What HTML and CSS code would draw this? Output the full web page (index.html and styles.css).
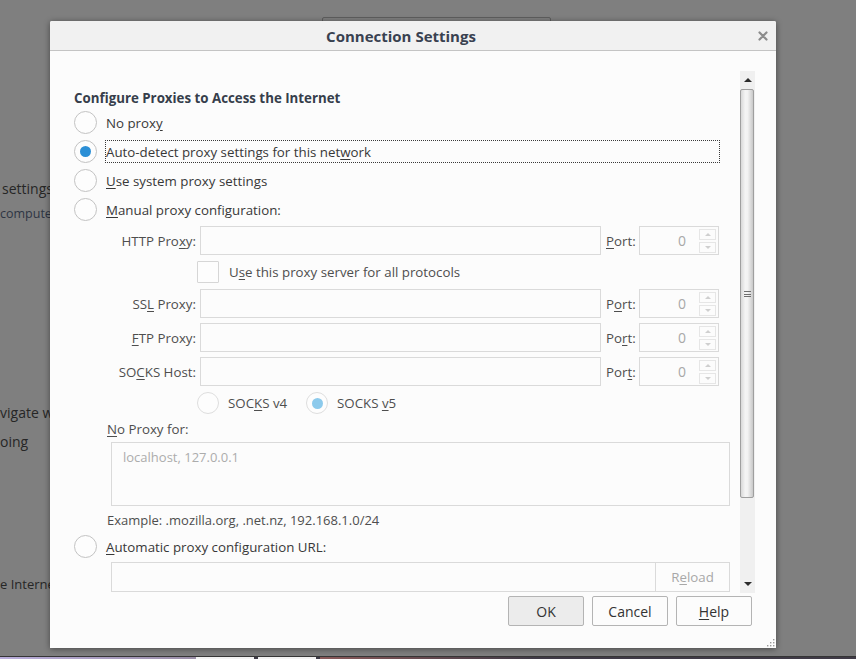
FILE: index.html
```html
<!DOCTYPE html>
<html>
<head>
<meta charset="utf-8">
<title>Connection Settings</title>
<link rel="stylesheet" href="styles.css">
</head>
<body>
<div class="screen">
  <div class="backdrop">
    <div class="bg-button"></div>
    <p class="bg-text t-settings">settings</p>
    <p class="bg-text t-compute">compute</p>
    <p class="bg-text t-navigate">vigate w</p>
    <p class="bg-text t-going">oing</p>
    <p class="bg-text t-internet">e Interne</p>
  </div>
  <div class="taskbar">
    <span class="tb-seg tb-a"></span>
    <span class="tb-seg tb-btn"></span>
    <span class="tb-seg tb-btn"></span>
    <span class="tb-seg tb-b"></span>
  </div>

  <div class="dialog">
    <div class="titlebar">
      <span class="title">Connection Settings</span>
      <svg class="close" width="10" height="10" viewBox="0 0 10 10"><path d="M1.5 1.5 L8.5 8.5 M8.5 1.5 L1.5 8.5" stroke="#8c8c8c" stroke-width="2.2" stroke-linecap="round"/></svg>
    </div>
    <div class="dlg-body">
      <div class="scroller">
        <div class="content">
          <h2 class="heading">Configure Proxies to Access the Internet</h2>

          <div class="radio-row">
            <span class="radio"></span>
            <span class="rlabel">No prox<u>y</u></span>
          </div>
          <div class="radio-row">
            <span class="radio checked"></span>
            <span class="rlabel focused">Auto-detect proxy settings for this net<u>w</u>ork</span>
          </div>
          <div class="radio-row">
            <span class="radio"></span>
            <span class="rlabel"><u>U</u>se system proxy settings</span>
          </div>
          <div class="radio-row">
            <span class="radio"></span>
            <span class="rlabel"><u>M</u>anual proxy configuration:</span>
          </div>

          <div class="manual">
            <div class="field-row">
              <span class="flabel">HTTP Pro<u>x</u>y:</span>
              <span class="input host"></span>
              <span class="plabel"><u>P</u>ort:</span>
              <span class="input port"><span class="pval">0</span><span class="spin"><span class="spin-up"></span><span class="spin-down"></span></span></span>
            </div>
            <div class="check-row">
              <span class="checkbox"></span>
              <span class="clabel">U<u>s</u>e this proxy server for all protocols</span>
            </div>
            <div class="field-row gap">
              <span class="flabel">SS<u>L</u> Proxy:</span>
              <span class="input host"></span>
              <span class="plabel">P<u>o</u>rt:</span>
              <span class="input port"><span class="pval">0</span><span class="spin"><span class="spin-up"></span><span class="spin-down"></span></span></span>
            </div>
            <div class="field-row gap">
              <span class="flabel"><u>F</u>TP Proxy:</span>
              <span class="input host"></span>
              <span class="plabel">Po<u>r</u>t:</span>
              <span class="input port"><span class="pval">0</span><span class="spin"><span class="spin-up"></span><span class="spin-down"></span></span></span>
            </div>
            <div class="field-row gap">
              <span class="flabel">SO<u>C</u>KS Host:</span>
              <span class="input host"></span>
              <span class="plabel">Por<u>t</u>:</span>
              <span class="input port"><span class="pval">0</span><span class="spin"><span class="spin-up"></span><span class="spin-down"></span></span></span>
            </div>
            <div class="socks-row">
              <span class="socks-opt">
                <span class="radio small"></span>
                <span class="slabel">SOC<u>K</u>S v4</span>
              </span>
              <span class="socks-opt">
                <span class="radio small checked-dis"></span>
                <span class="slabel">SOCKS <u>v</u>5</span>
              </span>
            </div>
          </div>

          <div class="noproxy-label"><u>N</u>o Proxy for:</div>
          <div class="textarea"><span class="placeholder">localhost, 127.0.0.1</span></div>
          <div class="example">Example: .mozilla.org, .net.nz, 192.168.1.0/24</div>

          <div class="radio-row">
            <span class="radio"></span>
            <span class="rlabel"><u>A</u>utomatic proxy configuration URL:</span>
          </div>
          <div class="url-row">
            <span class="input url"></span>
            <span class="reload">R<u>e</u>load</span>
          </div>
        </div>

        <div class="scrollbar">
          <div class="sb-btn sb-up"><span class="tri-up"></span></div>
          <div class="sb-thumb"><span class="grip-lines"></span></div>
          <div class="sb-track"></div>
          <div class="sb-btn sb-down"><span class="tri-down"></span></div>
        </div>
      </div>

      <div class="buttons">
        <span class="btn default">OK</span>
        <span class="btn">Cancel</span>
        <span class="btn"><u>H</u>elp</span>
      </div>
    </div>
    <svg class="resize" width="9" height="9" viewBox="0 0 9 9">
      <rect x="7" y="1" width="1.4" height="1.4" fill="#9a9a9a"/>
      <rect x="4" y="4" width="1.4" height="1.4" fill="#9a9a9a"/>
      <rect x="7" y="4" width="1.4" height="1.4" fill="#9a9a9a"/>
      <rect x="1" y="7" width="1.4" height="1.4" fill="#9a9a9a"/>
      <rect x="4" y="7" width="1.4" height="1.4" fill="#9a9a9a"/>
      <rect x="7" y="7" width="1.4" height="1.4" fill="#9a9a9a"/>
    </svg>
  </div>
</div>
</body>
</html>
```

FILE: styles.css
```css
* { box-sizing: border-box; }

html, body {
  margin: 0;
  padding: 0;
}

body {
  width: 856px;
  height: 659px;
  overflow: hidden;
  background: #7f7f7f;
  font-family: "Open Sans", "Noto Sans", "DejaVu Sans", sans-serif;
}

.screen {
  position: relative;
  width: 856px;
  height: 659px;
}

/* ---------- dimmed page behind the dialog ---------- */
.backdrop {
  height: 656px;
  overflow: hidden;
  background: #7f7f7f;
  padding-top: 17px;
}

.bg-button {
  margin-left: 322px;
  width: 229px;
  height: 40px;
  border: 1px solid #5e5e5e;
  border-radius: 2px;
}

.bg-text {
  margin: 0;
  height: 20px;
  line-height: 20px;
  font-size: 13.5px;
  color: #262626;
  white-space: nowrap;
}

.t-settings { margin-top: 122px; margin-left: 2px; font-size: 14px; }
.t-compute  { margin-top: 5px; color: #2e3544; font-size: 12.5px; }
.t-navigate { margin-top: 179px; font-size: 14px; }
.t-going    { margin-top: 9px; font-size: 14px; }
.t-internet { margin-top: 122px; font-size: 13px; }

.taskbar {
  display: flex;
  height: 3px;
  border-top: 1px solid #353535;
  background: #3d3a46;
}
.tb-seg { display: block; height: 2px; }
.tb-a { width: 196px; background: linear-gradient(90deg, #b9addb, #9b8fa8); }
.tb-btn { width: 58px; margin-right: 4px; background: #f2f2f2; }
.tb-b { flex: 1; background: linear-gradient(90deg, #8a5a5a, #3f3a46 40%); }

/* ---------- dialog ---------- */
.dialog {
  position: absolute;
  left: 50px;
  top: 21px;
  width: 726px;
  height: 627px;
  background: #fcfcfc;
  box-shadow: 0 1px 6px rgba(0, 0, 0, 0.45);
  border-radius: 2px 2px 0 0;
  display: flex;
  flex-direction: column;
}

.titlebar {
  height: 30px;
  flex: none;
  background: #f1f1f1;
  border-bottom: 1px solid #c4c4c4;
  display: flex;
  align-items: center;
  justify-content: center;
  position: relative;
  border-radius: 2px 2px 0 0;
}

.title {
  font-size: 15px;
  font-weight: 700;
  color: #394150;
  margin-right: 24px;
  margin-top: 1px;
}

.close {
  position: absolute;
  right: 8px;
  top: 10px;
}

.dlg-body {
  flex: 1;
  display: flex;
  flex-direction: column;
  padding: 20px 21px 0 12px;
}

.scroller {
  display: flex;
  height: 522px;
  flex: none;
}

.content {
  flex: 1;
  overflow: hidden;
  padding-left: 12px;
  font-size: 13.3px;
  color: #383838;
}

u { text-decoration: underline; text-underline-offset: 2px; }

.heading {
  margin: 18px 0 0;
  height: 18px;
  line-height: 18px;
  font-size: 13.3px;
  font-weight: 700;
  color: #363e4b;
  white-space: nowrap;
}

/* radio rows */
.radio-row {
  display: flex;
  align-items: center;
  height: 29px;
}
.heading + .radio-row { margin-top: 1px; }

.radio {
  flex: none;
  width: 23px;
  height: 23px;
  border-radius: 50%;
  border: 1px solid #c3c3c3;
  background: #fdfdfd;
  display: flex;
  align-items: center;
  justify-content: center;
}
.radio.checked::after {
  content: "";
  width: 11px;
  height: 11px;
  border-radius: 50%;
  background: #2b8fd6;
}
.radio.small {
  width: 22px;
  height: 22px;
  border-color: #dedede;
}
.radio.checked-dis::after {
  content: "";
  width: 11px;
  height: 11px;
  border-radius: 50%;
  background: #8ccaec;
}

.rlabel {
  margin-left: 8px;
  width: 615px;
  height: 23px;
  line-height: 20px;
  padding-top: 1px;
  border: 1px solid transparent;
  white-space: nowrap;
}
.rlabel.focused { border: 1px dotted #3a3a3a; }

/* manual config */
.manual {
  margin-top: 2px;
  margin-left: 37px;
  color: #4e4e4e;
}

.field-row {
  display: flex;
  align-items: center;
  height: 29px;
}
.field-row.gap { margin-top: 5px; }

.flabel {
  width: 85px;
  margin-right: 4px;
  text-align: right;
  white-space: nowrap;
}

.input {
  display: block;
  height: 29px;
  border: 1px solid #dadada;
  background: #fcfcfc;
}
.input.host { width: 401px; }

.plabel {
  width: 29px;
  margin-left: 5px;
  margin-right: 4px;
  white-space: nowrap;
}

.input.port {
  width: 80px;
  display: flex;
  align-items: center;
  justify-content: flex-end;
  padding-right: 2px;
}
.pval {
  color: #a8a8a8;
  margin-right: 13px;
  font-size: 14px;
}
.spin {
  display: flex;
  flex-direction: column;
  gap: 2px;
  width: 17px;
}
.spin-up, .spin-down {
  height: 11px;
  border: 1px solid #e6e6e6;
  position: relative;
}
.spin-up::after, .spin-down::after {
  content: "";
  position: absolute;
  left: 5px;
  top: 3px;
  border-left: 3px solid transparent;
  border-right: 3px solid transparent;
}
.spin-up::after { border-bottom: 3px solid #cfcfcf; }
.spin-down::after { border-top: 3px solid #cfcfcf; }

.check-row {
  display: flex;
  align-items: center;
  height: 24px;
  margin-top: 5px;
}
.checkbox {
  width: 22px;
  height: 22px;
  margin-left: 86px;
  border: 1px solid #d6d6d6;
  border-radius: 1px;
  background: #fdfdfd;
}
.clabel {
  margin-left: 10px;
  white-space: nowrap;
}

.socks-row {
  display: flex;
  align-items: center;
  height: 24px;
  margin-top: 5px;
  padding-left: 86px;
}
.socks-opt {
  display: flex;
  align-items: center;
}
.socks-opt:first-child { width: 109px; }
.slabel { margin-left: 9px; white-space: nowrap; }

.noproxy-label {
  margin-top: 5px;
  margin-left: 33px;
  height: 18px;
  line-height: 18px;
  color: #4e4e4e;
}

.textarea {
  margin-top: 4px;
  margin-left: 37px;
  width: 619px;
  height: 64px;
  border: 1px solid #dadada;
  background: #fcfcfc;
  padding: 5px 11px;
}
.placeholder {
  color: #acacac;
  font-size: 13px;
}

.example {
  margin-top: 5px;
  margin-left: 33px;
  height: 18px;
  line-height: 18px;
  color: #4e4e4e;
  font-size: 13px;
}
.example + .radio-row { margin-top: 3px; }

.url-row {
  display: flex;
  margin-top: 1px;
  margin-left: 37px;
  height: 30px;
}
.input.url { width: 544px; height: 30px; border-right: none; }
.reload {
  width: 75px;
  height: 30px;
  border: 1px solid #dadada;
  background: #fcfcfc;
  color: #a8a8a8;
  display: flex;
  align-items: center;
  justify-content: center;
}

/* scrollbar */
.scrollbar {
  width: 15px;
  flex: none;
  background: #f0f0f0;
  display: flex;
  flex-direction: column;
}
.sb-btn {
  height: 18px;
  display: flex;
  align-items: center;
  justify-content: center;
}
.tri-up {
  border-left: 4px solid transparent;
  border-right: 4px solid transparent;
  border-bottom: 4px solid #2c2c2c;
}
.tri-down {
  border-left: 4px solid transparent;
  border-right: 4px solid transparent;
  border-top: 4px solid #2c2c2c;
}
.sb-thumb {
  height: 409px;
  margin: 0 1px 0 0;
  border: 1px solid #9f9f9f;
  border-radius: 2px;
  background: linear-gradient(90deg, #d8d8d8 0%, #f4f4f4 35%, #f2f2f2 55%, #c9c9c9 100%);
  display: flex;
  align-items: center;
  justify-content: center;
}
.grip-lines {
  width: 7px;
  height: 6px;
  border-top: 1px solid #6e6e6e;
  border-bottom: 1px solid #6e6e6e;
  position: relative;
}
.grip-lines::after {
  content: "";
  position: absolute;
  left: 0;
  right: 0;
  top: 2px;
  border-top: 1px solid #6e6e6e;
}
.sb-track { flex: 1; }

/* buttons */
.buttons {
  display: flex;
  justify-content: flex-end;
  gap: 8px;
  margin-top: 3px;
  margin-right: 3px;
}
.btn {
  width: 76px;
  height: 30px;
  border: 1px solid #b4b4b4;
  border-radius: 2px;
  background: #fcfcfc;
  color: #333;
  font-size: 14px;
  display: flex;
  align-items: center;
  justify-content: center;
}
.btn.default { background: #ececec; }

.resize {
  position: absolute;
  right: 1px;
  bottom: 1px;
}
```
